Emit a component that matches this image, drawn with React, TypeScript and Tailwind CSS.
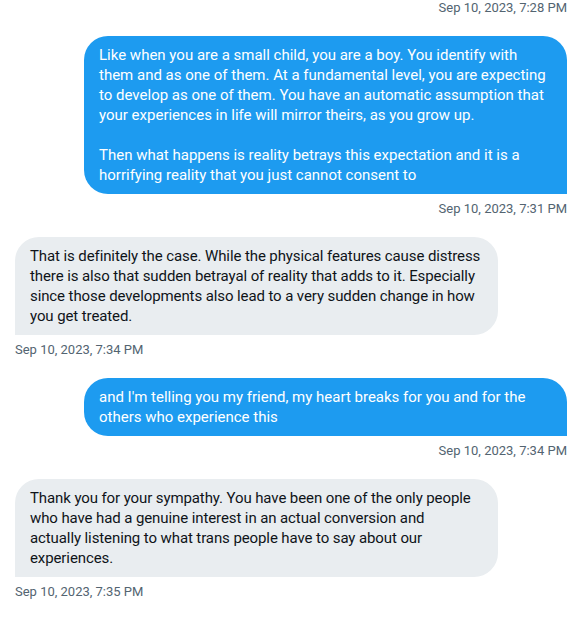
type Message = {
  id: number
  fromMe: boolean
  text: string
  time: string
}

const messages: Message[] = [
  {
    id: 1,
    fromMe: true,
    text: 'Like when you are a small child, you are a boy. You identify with\nthem and as one of them. At a fundamental level, you are expecting\nto develop as one of them. You have an automatic assumption that\nyour experiences in life will mirror theirs, as you grow up.\n\nThen what happens is reality betrays this expectation and it is a\nhorrifying reality that you just cannot consent to',
    time: 'Sep 10, 2023, 7:31 PM',
  },
  {
    id: 2,
    fromMe: false,
    text: 'That is definitely the case. While the physical features cause distress\nthere is also that sudden betrayal of reality that adds to it. Especially\nsince those developments also lead to a very sudden change in how\nyou get treated.',
    time: 'Sep 10, 2023, 7:34 PM',
  },
  {
    id: 3,
    fromMe: true,
    text: "and I'm telling you my friend, my heart breaks for you and for the\nothers who experience this",
    time: 'Sep 10, 2023, 7:34 PM',
  },
  {
    id: 4,
    fromMe: false,
    text: 'Thank you for your sympathy. You have been one of the only people\nwho have had a genuine interest in an actual conversion and\nactually listening to what trans people have to say about our\nexperiences.',
    time: 'Sep 10, 2023, 7:35 PM',
  },
]

export default function App() {
  return (
    <div className="min-h-screen bg-white px-[15px] font-['Roboto',sans-serif]">
      <div className="text-right text-[13px] leading-4 text-[#536471]">
        Sep 10, 2023, 7:28 PM
      </div>

      <div className="flex flex-col">
        {messages.map((m) => (
          <div
            key={m.id}
            className={`mt-5 flex flex-col ${m.fromMe ? 'items-end' : 'items-start'}`}
          >
            {m.fromMe ? (
              <div className="w-[483px] whitespace-pre rounded-3xl rounded-br-none bg-[#1d9bf0] px-[15px] py-[9px] text-[15px] leading-5 text-white">
                {m.text}
              </div>
            ) : (
              <div className="w-[483px] whitespace-pre rounded-3xl rounded-bl-none bg-[#e9edf0] px-[15px] py-[9px] text-[15px] leading-5 tracking-[-0.1px] text-[#0f1419]">
                {m.text}
              </div>
            )}
            <div className="mt-[7px] text-[13px] leading-4 text-[#536471]">{m.time}</div>
          </div>
        ))}
      </div>
    </div>
  )
}
